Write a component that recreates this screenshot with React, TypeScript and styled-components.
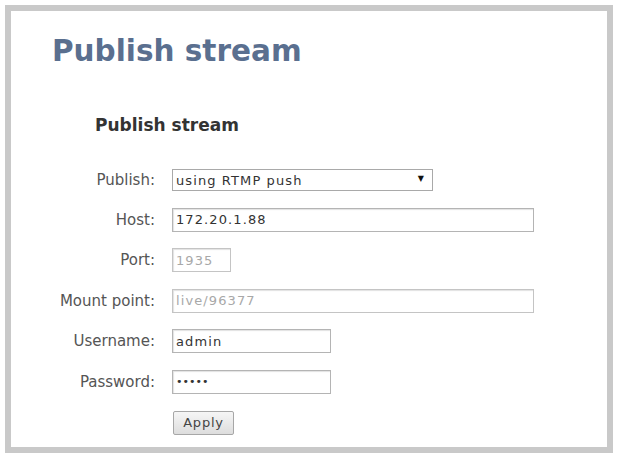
import React from 'react';
import styled, { createGlobalStyle } from 'styled-components';

const GlobalStyle = createGlobalStyle`
  html, body {
    margin: 0;
    padding: 0;
    background: #ffffff;
  }
  body {
    font-family: 'DejaVu Sans', Verdana, sans-serif;
  }
`;

const Page = styled.div`
  padding: 5px;
  width: 618px;
  height: 456px;
  box-sizing: border-box;
`;

const Frame = styled.div`
  box-sizing: border-box;
  width: 608px;
  height: 448px;
  border: 6px solid #c9c9c9;
  background: #ffffff;
  padding: 22px 0 0 41px;
`;

const Title = styled.h1`
  margin: 0;
  font-size: 29.5px;
  line-height: 36px;
  font-weight: bold;
  color: #5a6f8f;
`;

const SubTitle = styled.h2`
  margin: 46px 0 0 43px;
  font-size: 17px;
  line-height: 20px;
  font-weight: bold;
  color: #333333;
`;

const Form = styled.form`
  display: grid;
  grid-template-columns: 103px auto;
  column-gap: 17px;
  row-gap: 16.6px;
  align-items: center;
  margin: 34px 0 0 0;
`;

const Label = styled.label`
  justify-self: end;
  font-size: 15px;
  color: #555555;
  white-space: nowrap;
`;

const Field = styled.input<{ $w: number }>`
  box-sizing: border-box;
  width: ${(p) => p.$w}px;
  height: 24px;
  border: 1px solid #b4b4b4;
  box-shadow: inset 1px 1px 1px #e2e2e2;
  padding: 0 3px;
  font-family: 'DejaVu Sans', Verdana, sans-serif;
  font-size: 13px;
  letter-spacing: 1.1px;
  color: #333333;
  background: #ffffff;
  outline: none;

  &:disabled {
    color: #a8a8a8;
    border-color: #c4c4c4;
  }

  &[type='password'] {
    letter-spacing: 0;
    font-size: 11px;
  }
`;

const SelectWrap = styled.div`
  position: relative;
  width: 261px;
  height: 22px;

  &::after {
    content: '▼';
    position: absolute;
    right: 9px;
    top: 5px;
    font-size: 8px;
    color: #111111;
    pointer-events: none;
  }
`;

const Select = styled.select`
  appearance: none;
  box-sizing: border-box;
  width: 100%;
  height: 100%;
  border: 1px solid #a9a9a9;
  border-radius: 0;
  padding: 0 3px;
  background: #ffffff;
  font-family: 'DejaVu Sans', Verdana, sans-serif;
  font-size: 13px;
  letter-spacing: 1.1px;
  color: #333333;
  outline: none;
`;

const Button = styled.button`
  margin-left: 1px;
  width: 61px;
  height: 24px;
  border: 1px solid #a7a7a7;
  border-radius: 2px;
  background: linear-gradient(#f6f6f6, #dddddd);
  font-family: 'DejaVu Sans', Verdana, sans-serif;
  font-size: 13px;
  letter-spacing: 0.8px;
  color: #444444;
  padding: 0;
`;

const Spacer = styled.span``;

const App = () => {
  return (
    <Page>
      <GlobalStyle />
      <Frame>
        <Title>Publish stream</Title>
        <SubTitle>Publish stream</SubTitle>
        <Form onSubmit={(e) => e.preventDefault()}>
          <Label>Publish:</Label>
          <SelectWrap>
            <Select defaultValue="rtmp">
              <option value="rtmp">using RTMP push</option>
            </Select>
          </SelectWrap>

          <Label>Host:</Label>
          <Field $w={362} defaultValue="172.20.1.88" />

          <Label>Port:</Label>
          <Field $w={59} defaultValue="1935" disabled />

          <Label>Mount point:</Label>
          <Field $w={362} defaultValue="live/96377" disabled />

          <Label>Username:</Label>
          <Field $w={159} defaultValue="admin" />

          <Label>Password:</Label>
          <Field $w={159} type="password" defaultValue="admin" />

          <Spacer />
          <Button type="submit">Apply</Button>
        </Form>
      </Frame>
    </Page>
  );
};

export default App;
